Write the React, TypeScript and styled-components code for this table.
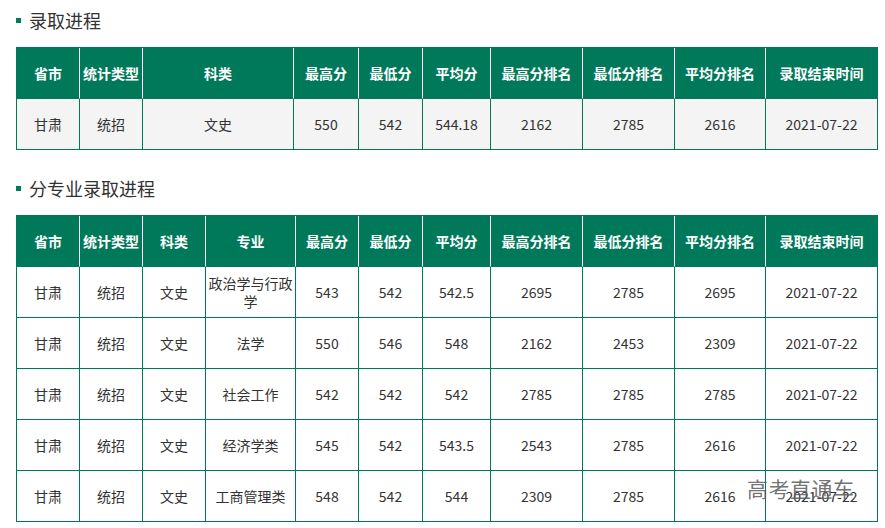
import React from "react";
import styled, { createGlobalStyle } from "styled-components";

const GlobalStyle = createGlobalStyle`
  * { box-sizing: border-box; }
  body {
    margin: 0;
    background: #ffffff;
    font-family: "Noto Sans CJK SC", "Microsoft YaHei", "Noto Sans", sans-serif;
    color: #333333;
  }
`;

const GREEN = "#00795a";

const Page = styled.div`
  position: relative;
  width: 885px;
  height: 528px;
  padding: 0 8px 0 16px;
  overflow: hidden;
`;

const Title = styled.h2`
  display: flex;
  align-items: center;
  gap: 8px;
  height: 40px;
  margin: 0 0 7px 0;
  font-size: 18px;
  font-weight: 400;
  color: #333333;
  line-height: 40px;
  &::before {
    content: "";
    width: 5px;
    height: 5px;
    background: ${GREEN};
  }
`;

const Table = styled.table<{ $mb?: number }>`
  width: 861px;
  border-collapse: separate;
  border-spacing: 0;
  table-layout: fixed;
  border-top: 1px solid ${GREEN};
  border-left: 1px solid ${GREEN};
  margin-bottom: ${(p) => p.$mb ?? 0}px;
`;

const Th = styled.th`
  height: 51px;
  padding: 0 1px;
  background: ${GREEN};
  color: #ffffff;
  font-size: 14px;
  font-weight: 700;
  text-align: center;
  white-space: nowrap;
  border-right: 1px solid #ffffff;
  border-bottom: 1px solid ${GREEN};
  &:last-child {
    border-right: 1px solid ${GREEN};
  }
`;

const Td = styled.td<{ $shade?: boolean }>`
  height: 51px;
  padding: 0 1px;
  background: ${(p) => (p.$shade ? "#f4f4f4" : "#ffffff")};
  color: #333333;
  font-size: 14px;
  line-height: 18px;
  text-align: center;
  border-right: 1px solid ${GREEN};
  border-bottom: 1px solid ${GREEN};
`;

const Watermark = styled.div`
  position: absolute;
  left: 747px;
  top: 473px;
  font-size: 21px;
  color: rgba(90, 90, 90, 0.85);
  letter-spacing: 0.5px;
  pointer-events: none;
`;

const cols1 = [63, 63, 151, 65, 64, 68, 92, 92, 91, 112];
const head1 = ["省市", "统计类型", "科类", "最高分", "最低分", "平均分", "最高分排名", "最低分排名", "平均分排名", "录取结束时间"];
const row1 = ["甘肃", "统招", "文史", "550", "542", "544.18", "2162", "2785", "2616", "2021-07-22"];

const cols2 = [63, 63, 63, 90, 63, 64, 68, 92, 92, 91, 112];
const head2 = ["省市", "统计类型", "科类", "专业", "最高分", "最低分", "平均分", "最高分排名", "最低分排名", "平均分排名", "录取结束时间"];
const rows2 = [
  ["甘肃", "统招", "文史", "政治学与行政学", "543", "542", "542.5", "2695", "2785", "2695", "2021-07-22"],
  ["甘肃", "统招", "文史", "法学", "550", "546", "548", "2162", "2453", "2309", "2021-07-22"],
  ["甘肃", "统招", "文史", "社会工作", "542", "542", "542", "2785", "2785", "2785", "2021-07-22"],
  ["甘肃", "统招", "文史", "经济学类", "545", "542", "543.5", "2543", "2785", "2616", "2021-07-22"],
  ["甘肃", "统招", "文史", "工商管理类", "548", "542", "544", "2309", "2785", "2616", "2021-07-22"],
];

export default function App() {
  return (
    <Page>
      <GlobalStyle />
      <Title>录取进程</Title>
      <Table $mb={18}>
        <colgroup>
          {cols1.map((w, i) => (
            <col key={i} style={{ width: w }} />
          ))}
        </colgroup>
        <thead>
          <tr>
            {head1.map((h) => (
              <Th key={h}>{h}</Th>
            ))}
          </tr>
        </thead>
        <tbody>
          <tr>
            {row1.map((c, i) => (
              <Td key={i} $shade>
                {c}
              </Td>
            ))}
          </tr>
        </tbody>
      </Table>
      <Title>分专业录取进程</Title>
      <Table>
        <colgroup>
          {cols2.map((w, i) => (
            <col key={i} style={{ width: w }} />
          ))}
        </colgroup>
        <thead>
          <tr>
            {head2.map((h) => (
              <Th key={h}>{h}</Th>
            ))}
          </tr>
        </thead>
        <tbody>
          {rows2.map((r, ri) => (
            <tr key={ri}>
              {r.map((c, i) => (
                <Td key={i}>{c}</Td>
              ))}
            </tr>
          ))}
        </tbody>
      </Table>
      <Watermark>高考直通车</Watermark>
    </Page>
  );
}
